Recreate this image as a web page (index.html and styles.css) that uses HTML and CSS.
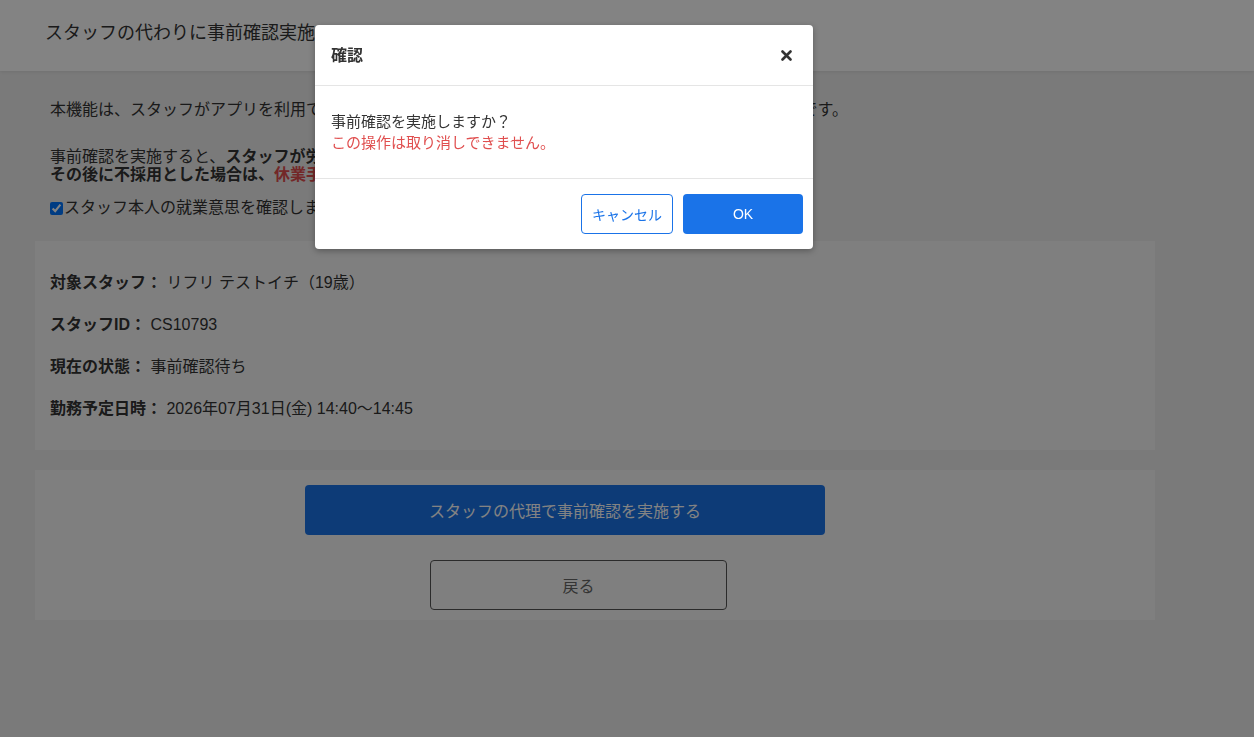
FILE: index.html
```html
<!DOCTYPE html>
<html lang="ja">
	<head>
		<meta charset="utf-8">
		<title>スタッフの代わりに事前確認実施</title>
		<link rel="stylesheet" href="styles.css">
	</head>
	<body>
		<header class="top">
			<h1 class="title">スタッフの代わりに事前確認実施</h1>
		</header>

		<div class="content">
			<div class="intro">
				<p class="lead">本機能は、スタッフがアプリを利用できない場合に、スタッフの代わりに事前確認を実施するための機能です。</p>
				<p class="notice">
					事前確認を実施すると、<b>スタッフが労働条件に同意したことになります。</b><br>
					<b>その後に不採用とした場合は、<span class="danger">休業手当が発生します。</span></b>
				</p>
				<label class="check"><input type="checkbox" checked>スタッフ本人の就業意思を確認しました</label>
			</div>

			<div class="card info">
				<div class="row"><b>対象スタッフ：</b> リフリ テストイチ（19歳）</div>
				<div class="row"><b>スタッフID：</b> CS10793</div>
				<div class="row"><b>現在の状態：</b> 事前確認待ち</div>
				<div class="row"><b>勤務予定日時：</b> 2026年07月31日(金) 14:40～14:45</div>
			</div>

			<div class="card actions">
				<button class="btn-primary">スタッフの代理で事前確認を実施する</button>
				<button class="btn-back">戻る</button>
			</div>
		</div>

		<div class="overlay"></div>

		<div class="modal">
			<div class="modal-header">
				<span class="modal-title">確認</span>
				<button class="close">
					<svg width="11" height="11" viewBox="0 0 11 11">
						<path d="M1.5 1.5 L9.5 9.5 M9.5 1.5 L1.5 9.5" stroke="#333" stroke-width="2.6" stroke-linecap="round"/>
					</svg>
				</button>
			</div>
			<div class="modal-body">
				<p>事前確認を実施しますか？</p>
				<p class="warn">この操作は取り消しできません。</p>
			</div>
			<div class="modal-footer">
				<button class="btn-cancel">キャンセル</button>
				<button class="btn-ok">OK</button>
			</div>
		</div>
	</body>
</html>
```

FILE: styles.css
```css
* {
	margin: 0;
	padding: 0;
	box-sizing: border-box;
}

body {
	font-family: "Liberation Sans", "Noto Sans CJK JP", sans-serif;
	font-size: 16px;
	color: #333;
	background-color: #ededed;
}

button {
	font-family: inherit;
	cursor: pointer;
}

/* ヘッダー */
.top {
	height: 71px;
	background-color: #fff;
	box-shadow: 0 1px 3px rgba(0, 0, 0, 0.08);
	padding: 21px 0 0 45px;
}

.top .title {
	font-size: 18px;
	font-weight: normal;
	line-height: 24px;
}

.content {
	width: 1120px;
	margin-left: 35px;
	padding-top: 30px;
}

.intro {
	padding: 0 15px;
	line-height: 18px;
}

.intro .lead {
	margin-bottom: 29px;
}

.intro .notice {
	margin-bottom: 15px;
}

.danger {
	color: #e04f4f;
}

.check {
	display: flex;
	align-items: center;
}

.check input {
	width: 13px;
	height: 13px;
	margin: 0 1px 0 0;
}

.card {
	background-color: #f8f8f8;
}

.info {
	margin-top: 24px;
	padding: 30px 15px 29px;
	display: flex;
	flex-direction: column;
	gap: 18px;
}

.info .row {
	line-height: 24px;
}

.actions {
	margin-top: 20px;
	padding: 15px 0 10px;
	display: flex;
	flex-direction: column;
	gap: 25px;
}

.btn-primary {
	width: 520px;
	height: 50px;
	margin-left: 270px;
	border: none;
	border-radius: 4px;
	background-color: #1a73e8;
	color: #fff;
	font-size: 16px;
}

.btn-back {
	width: 297px;
	height: 50px;
	margin-left: 395px;
	border: 1px solid #555;
	border-radius: 4px;
	background: transparent;
	color: #666;
	font-size: 16px;
}

/* モーダル */
.overlay {
	position: fixed;
	top: 0;
	left: 0;
	right: 0;
	bottom: 0;
	background-color: rgba(0, 0, 0, 0.485);
}

.modal {
	position: absolute;
	top: 25px;
	left: 315px;
	width: 498px;
	background-color: #fff;
	border-radius: 4px;
	box-shadow: 0 2px 6px rgba(0, 0, 0, 0.3);
}

.modal-header {
	height: 61px;
	padding: 0 21px 0 16px;
	display: flex;
	align-items: center;
	justify-content: space-between;
	border-bottom: 1px solid #e5e5e5;
}

.modal-title {
	font-size: 16px;
	font-weight: bold;
	color: #333;
	margin-top: -2px;
}

.close {
	border: none;
	background: none;
	display: flex;
}

.modal-body {
	padding: 25px 16px;
	font-size: 15px;
	line-height: 21px;
	color: #333;
	border-bottom: 1px solid #e5e5e5;
}

.modal-body .warn {
	color: #e04f4f;
}

.modal-footer {
	padding: 15px 10px 15px 0;
	display: flex;
	justify-content: flex-end;
	gap: 10px;
}

.btn-cancel,
.btn-ok {
	height: 40px;
	border-radius: 4px;
	font-size: 14px;
}

.btn-cancel {
	width: 92px;
	border: 1px solid #1a73e8;
	background-color: #fff;
	color: #1a73e8;
}

.btn-ok {
	width: 120px;
	border: none;
	background-color: #1a73e8;
	color: #fff;
}
```
